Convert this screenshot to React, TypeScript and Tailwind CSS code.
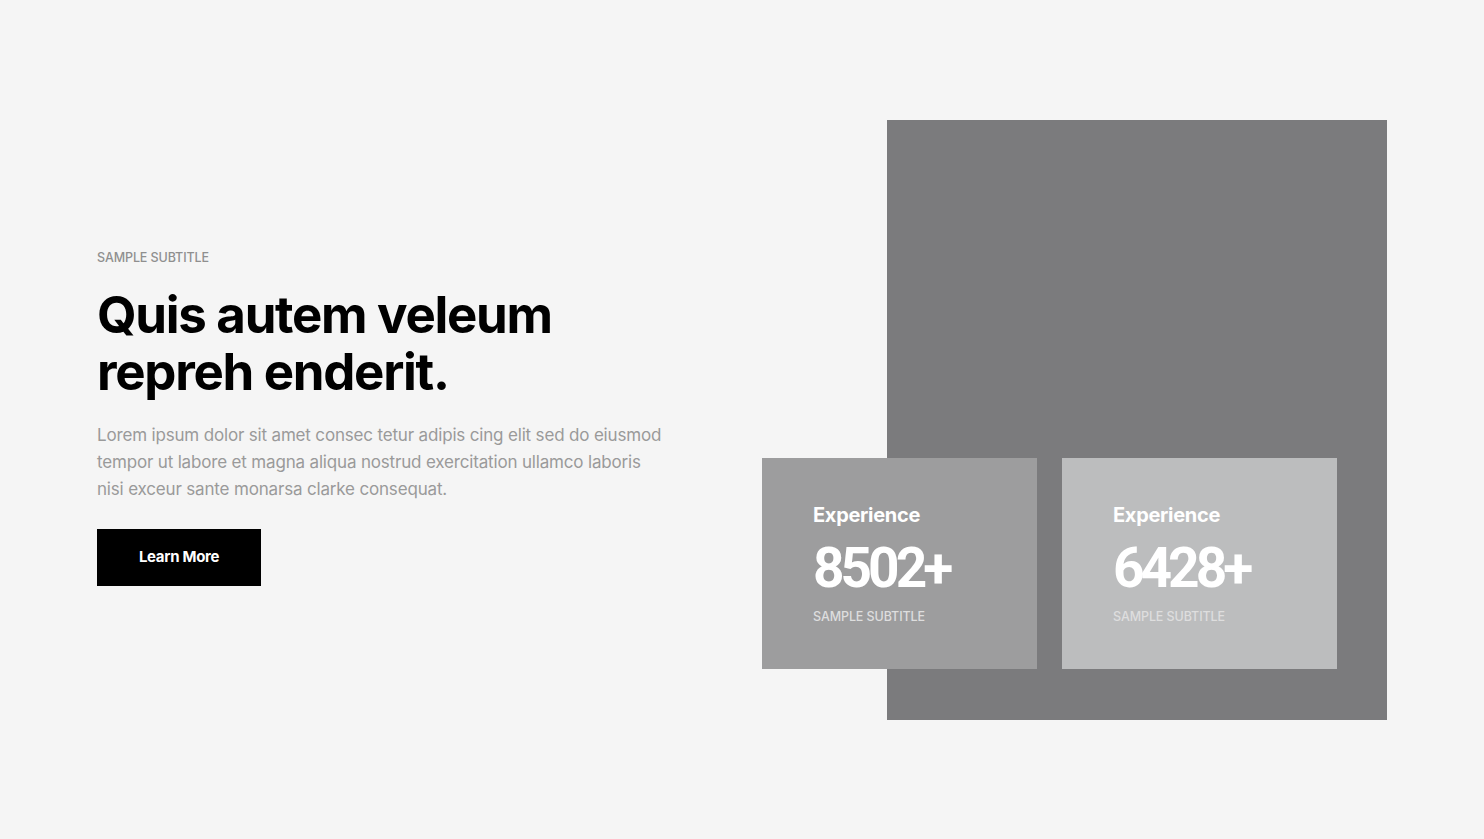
import React from "react";

const font = { fontFamily: "Inter, 'Noto Sans', sans-serif" };

function StatCard({ bg, value }: { bg: string; value: string }) {
  return (
    <div className={`w-[275px] h-[211px] ${bg} pl-[51px] pt-[44px] flex flex-col`}>
      <div className="text-white text-[20px] font-bold leading-[26px] tracking-[-0.3px]">Experience</div>
      <div
        className="text-white text-[55px] font-bold leading-[56px] tracking-[-4px] mt-[12px]"
        style={{ fontFamily: "Roboto, 'Noto Sans', sans-serif" }}
      >
        {value}
      </div>
      <div className="text-[#dedede] text-[12.5px] font-medium leading-[16px] mt-[13px] tracking-[-0.1px]">SAMPLE SUBTITLE</div>
    </div>
  );
}

export default function App() {
  return (
    <div className="min-h-[839px] w-full bg-[#f5f5f5] flex items-center justify-between px-[97px]" style={font}>
      <div className="flex flex-col w-[620px] -mt-[4px]">
        <div className="text-[12.5px] font-medium text-[#8f8f8f] leading-[16px] tracking-[-0.1px]">SAMPLE SUBTITLE</div>
        <h1 className="mt-[20px] text-[51px] font-bold leading-[57px] text-black tracking-[-1.3px]">
          Quis autem veleum
          <br />
          repreh enderit.
        </h1>
        <p className="mt-[22px] text-[17px] leading-[27px] text-[#9a9a9a] tracking-[-0.17px] w-[620px]">
          Lorem ipsum dolor sit amet consec tetur adipis cing elit sed do eiusmod
          <br />
          tempor ut labore et magna aliqua nostrud exercitation ullamco laboris
          <br />
          nisi exceur sante monarsa clarke consequat.
        </p>
        <button className="mt-[26px] w-[164px] h-[57px] bg-black text-white text-[15px] font-bold tracking-[-0.3px]">
          Learn More
        </button>
      </div>
      <div className="relative w-[500px] h-[600px] bg-[#7b7b7d]">
        <div className="absolute left-[-125px] bottom-[51px] flex gap-[25px]">
          <StatCard bg="bg-[#9d9d9e]" value="8502+" />
          <StatCard bg="bg-[#bcbdbe]" value="6428+" />
        </div>
      </div>
    </div>
  );
}
